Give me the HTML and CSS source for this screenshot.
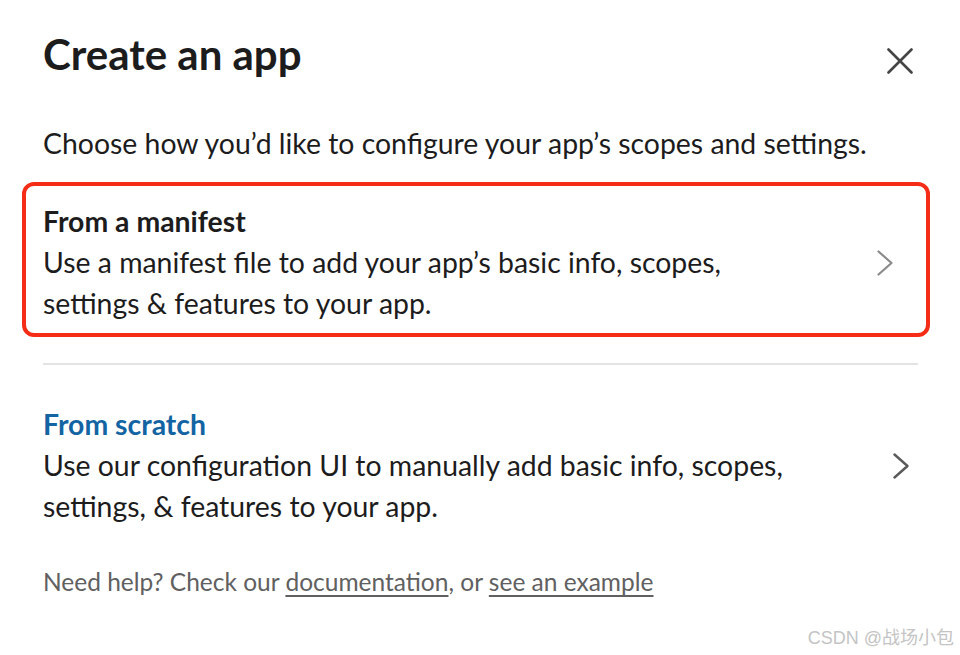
FILE: index.html
```html
<!DOCTYPE html>
<html lang="en">
<head>
<meta charset="utf-8">
<title>Create an app</title>
<link rel="stylesheet" href="styles.css">
</head>
<body>
<div class="modal">
  <div class="header">
    <h1 class="title">Create an app</h1>
    <button class="close" aria-label="Close">
      <svg width="26" height="26" viewBox="0 0 26 26"><path d="M1.5 1.5 L24.5 24.5 M24.5 1.5 L1.5 24.5" stroke="#454545" stroke-width="2.6" stroke-linecap="round" fill="none"/></svg>
    </button>
  </div>
  <p class="intro">Choose how you’d like to configure your app’s scopes and settings.</p>
  <div class="option option-manifest">
    <div class="option-text">
      <div class="option-title">From a manifest</div>
      <div class="option-desc">Use a manifest file to add your app’s basic info, scopes,<br>settings &amp; features to your app.</div>
    </div>
    <svg class="chev chev-light" width="16" height="26" viewBox="0 0 16 26"><path d="M1.5 1.5 L14.5 13 L1.5 24.5" stroke="#8a8a8a" stroke-width="2.2" stroke-linecap="round" stroke-linejoin="round" fill="none"/></svg>
  </div>
  <div class="divider"></div>
  <div class="option option-scratch">
    <div class="option-text">
      <div class="option-title blue">From scratch</div>
      <div class="option-desc">Use our configuration UI to manually add basic info, scopes,<br>settings, &amp; features to your app.</div>
    </div>
    <svg class="chev" width="16" height="26" viewBox="0 0 16 26"><path d="M1.5 1.5 L14.5 13 L1.5 24.5" stroke="#5a5a5a" stroke-width="2.4" stroke-linecap="round" stroke-linejoin="round" fill="none"/></svg>
  </div>
  <p class="help">Need help? Check our <a href="#">documentation</a>, or <a href="#">see an example</a></p>
</div>
<div class="watermark">CSDN @战场小包</div>
</body>
</html>
```
FILE: styles.css
```css
html, body {
  margin: 0;
  padding: 0;
  background: #ffffff;
}
body {
  font-family: Lato, "Open Sans", sans-serif;
  color: #1d1c1d;
  width: 960px;
  height: 655px;
  overflow: hidden;
  position: relative;
}
.modal {
  padding: 29px 42px 0 43px;
}
.header {
  display: flex;
  justify-content: space-between;
  align-items: flex-start;
}
.title {
  margin: 0;
  font-size: 42px;
  line-height: 50px;
  font-weight: 700;
  color: #1d1c1d;
}
.close {
  border: 0;
  background: none;
  padding: 0;
  margin: 19px 5px 0 0;
  width: 26px;
  height: 26px;
  display: block;
}
.close svg {
  display: block;
}
.intro {
  margin: 44px 0 0;
  font-size: 28.4px;
  line-height: 41px;
}
.option {
  display: flex;
  align-items: center;
  justify-content: space-between;
}
.option-title {
  font-size: 28.4px;
  line-height: 41px;
  font-weight: 700;
}
.option-title.blue {
  color: #1264a3;
}
.option-desc {
  font-size: 28.4px;
  line-height: 41px;
}
.option-manifest {
  margin: 18px -12px 0 -21px;
  border: 4px solid #f52c16;
  border-radius: 12px;
  padding: 15px 33px 9px 17px;
}
.option-scratch {
  margin-top: 39px;
  padding-right: 9px;
}
.chev {
  display: block;
  flex: none;
}
.divider {
  margin-top: 26px;
  height: 2px;
  background: #e3e3e3;
}
.help {
  margin: 40px 0 0;
  font-size: 24.5px;
  line-height: 30px;
  color: #616061;
}
.help a {
  color: #616061;
  text-decoration: underline;
  text-decoration-thickness: 1.5px;
  text-underline-offset: 4px;
}
.watermark {
  position: absolute;
  right: 6px;
  bottom: 6px;
  font-family: "Liberation Sans", "Noto Sans CJK SC", sans-serif;
  font-size: 18px;
  line-height: 22px;
  color: #c4c4c4;
}
```
